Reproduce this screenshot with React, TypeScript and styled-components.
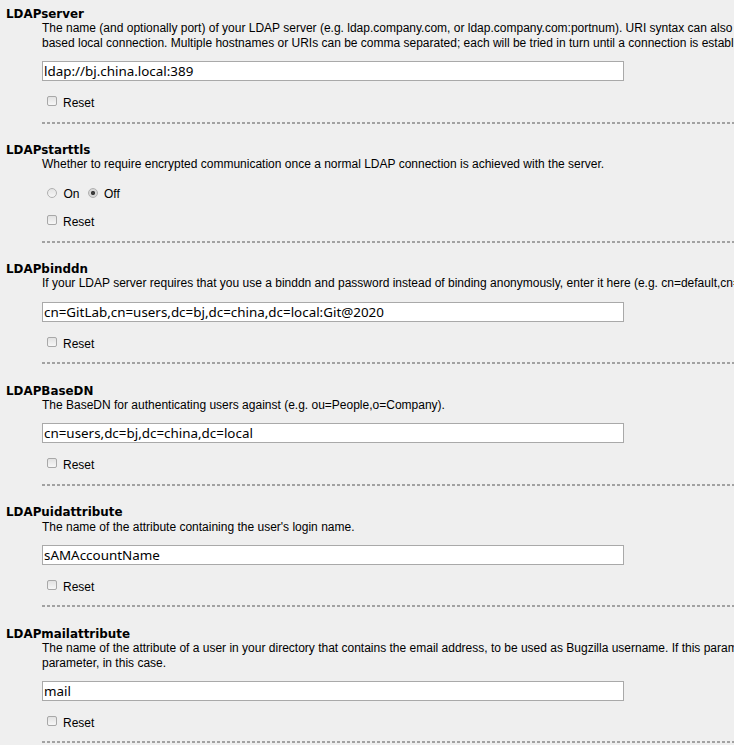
import React from "react";
import styled, { createGlobalStyle } from "styled-components";

const GlobalStyle = createGlobalStyle`
  html, body {
    margin: 0;
    padding: 0;
    background: #efefef;
    overflow: hidden;
  }
  body {
    font-family: "Liberation Sans", Arial, sans-serif;
    font-size: 12px;
    color: #000;
  }
`;

const Page = styled.div`
  width: 100%;
  overflow: hidden;
`;

const ParamList = styled.dl`
  margin: 0;
  padding: 6px 0 0 0;
  width: 1400px;
`;

const Param = styled.div`
  padding-bottom: 18.4px;
`;

const Term = styled.dt`
  margin: 0;
  padding: 1px 0 0 6px;
  font-family: "DejaVu Sans", Verdana, sans-serif;
  font-weight: bold;
  font-size: 11.9px;
  line-height: 14.4px;
`;

const Details = styled.dd`
  margin: 0 0 0 42px;
  display: flex;
  flex-direction: column;
  align-items: flex-start;
`;

const Description = styled.div`
  font-size: 12px;
  line-height: 14.4px;
`;

const Line = styled.div`
  white-space: nowrap;
`;

const TextField = styled.input`
  box-sizing: border-box;
  margin: 11px 0 0 0;
  width: 582px;
  height: 20px;
  padding: 0 1px;
  border: 1px solid #a9a9a9;
  border-radius: 0;
  background: #fff;
  color: #000;
  font-family: "Noto Sans", "Segoe UI", sans-serif;
  font-size: 13.4px;
  outline: none;
`;

const OptionRow = styled.div<{ $gap: number }>`
  margin-top: ${(p) => p.$gap}px;
  display: flex;
  align-items: flex-start;
  height: 14.4px;
  line-height: 14.4px;
`;

const Radio = styled.input`
  appearance: none;
  box-sizing: border-box;
  width: 10px;
  height: 10px;
  margin: 1px 0 0 5px;
  border: 1px solid #b0b0b0;
  border-radius: 50%;
  background: linear-gradient(#e4e4e4, #f6f6f6);
  &:checked {
    background: radial-gradient(circle, #3c3c3c 0 1.8px, #d6d6d6 2.4px);
  }
  & ~ & {
    margin-left: 8px;
  }
`;

const Check = styled.input`
  appearance: none;
  box-sizing: border-box;
  width: 10px;
  height: 10px;
  margin: 0 0 0 4.5px;
  border: 1px solid #a8a8a8;
  border-radius: 2px;
  background: linear-gradient(#e2e2e2, #f7f7f7);
`;

const OptionLabel = styled.label`
  margin-left: 6.5px;
  font-size: 12px;
`;

const Rule = styled.div`
  align-self: stretch;
  margin-top: 11px;
  height: 2px;
  background: repeating-linear-gradient(
    90deg,
    #a2a2a2 0 3px,
    transparent 3px 5px
  );
`;

type ParamDef = {
  name: string;
  lines: string[];
  value?: string;
  radio?: { options: string[]; selected: string };
};

const params: ParamDef[] = [
  {
    name: "LDAPserver",
    lines: [
      "The name (and optionally port) of your LDAP server (e.g. ldap.company.com, or ldap.company.com:portnum). URI syntax can also be used, such as ldaps://ldap.company.com (for a secure connection) or ldapi://%2fvar%2flib%2fldap_sock (for a socket-",
      "based local connection. Multiple hostnames or URIs can be comma separated; each will be tried in turn until a connection is established.",
    ],
    value: "ldap://bj.china.local:389",
  },
  {
    name: "LDAPstarttls",
    lines: [
      "Whether to require encrypted communication once a normal LDAP connection is achieved with the server.",
    ],
    radio: { options: ["On", "Off"], selected: "Off" },
  },
  {
    name: "LDAPbinddn",
    lines: [
      "If your LDAP server requires that you use a binddn and password instead of binding anonymously, enter it here (e.g. cn=default,cn=user:password). Leave this empty for the normal case of an anonymous bind.",
    ],
    value: "cn=GitLab,cn=users,dc=bj,dc=china,dc=local:Git@2020",
  },
  {
    name: "LDAPBaseDN",
    lines: ["The BaseDN for authenticating users against (e.g. ou=People,o=Company)."],
    value: "cn=users,dc=bj,dc=china,dc=local",
  },
  {
    name: "LDAPuidattribute",
    lines: ["The name of the attribute containing the user's login name."],
    value: "sAMAccountName",
  },
  {
    name: "LDAPmailattribute",
    lines: [
      "The name of the attribute of a user in your directory that contains the email address, to be used as Bugzilla username. If this parameter is empty, Bugzilla will use the LDAP username as the Bugzilla username. You may also want to set the \"emailsuffix\"",
      "parameter, in this case.",
    ],
    value: "mail",
  },
];

function ParamBlock({ def }: { def: ParamDef }) {
  return (
    <Param>
      <Term id={`${def.name}_desc`}>{def.name}</Term>
      <Details>
        <Description>
          {def.lines.map((l, i) => (
            <Line key={i}>{l}</Line>
          ))}
        </Description>
        {def.radio ? (
          <OptionRow $gap={15}>
            {def.radio.options.map((o) => (
              <React.Fragment key={o}>
                <Radio
                  type="radio"
                  name={def.name}
                  id={`${def.name}-${o}`}
                  defaultChecked={o === def.radio!.selected}
                />
                <OptionLabel htmlFor={`${def.name}-${o}`}>{o}</OptionLabel>
              </React.Fragment>
            ))}
          </OptionRow>
        ) : (
          <TextField type="text" name={def.name} defaultValue={def.value} />
        )}
        <OptionRow $gap={def.radio ? 14 : 15}>
          <Check type="checkbox" id={`reset-${def.name}`} />
          <OptionLabel htmlFor={`reset-${def.name}`}>Reset</OptionLabel>
        </OptionRow>
        <Rule />
      </Details>
    </Param>
  );
}

export default function App() {
  return (
    <>
      <GlobalStyle />
      <Page>
        <ParamList>
          {params.map((p) => (
            <ParamBlock key={p.name} def={p} />
          ))}
        </ParamList>
      </Page>
    </>
  );
}
